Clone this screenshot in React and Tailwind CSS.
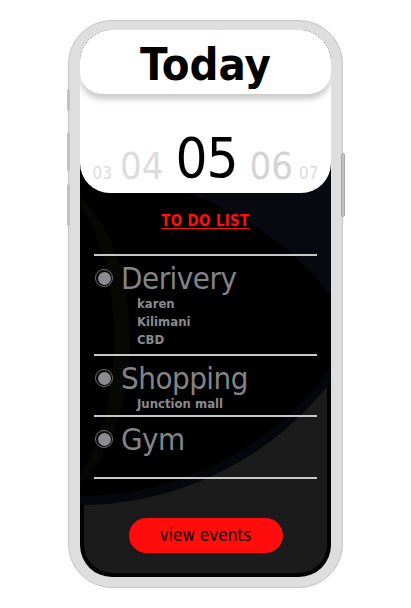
import React from "react";

const font = { fontFamily: "'DejaVu Sans Condensed', 'DejaVu Sans', sans-serif" };

function Task({ title, subs, pb }) {
  return (
    <div className="flex flex-col">
      <div className="flex items-center h-[44px]">
        <span className="ml-[1px] w-[18px] h-[18px] rounded-full border border-[#6f6f6f] flex items-center justify-center">
          <span className="w-[13px] h-[13px] rounded-full bg-[#8c8c90]" />
        </span>
        <span className="ml-[8px] text-[31px] text-[#838388] leading-none tracking-[-0.5px]">{title}</span>
      </div>
      {subs.length > 0 && (
        <div className="pl-[43px] flex flex-col -mt-[5px]" style={{ paddingBottom: pb }}>
          {subs.map((s) => (
            <span key={s} className="text-[13px] font-bold text-[#8a8a8e] leading-[18px]">
              {s}
            </span>
          ))}
        </div>
      )}
    </div>
  );
}

export default function App() {
  return (
    <div className="w-[411px] h-[608px] bg-white flex justify-center pt-[20px]" style={font}>
      <div className="relative w-[275px] h-[568px] rounded-[44px] bg-[#dedede] border border-[#c4c4c4] pt-[9px] px-[11px] pb-[10px]">
        {/* side buttons */}
        <div className="absolute left-[-2px] top-[68px] w-[3px] h-[22px] rounded bg-[#c2c2c2]" />
        <div className="absolute left-[-2px] top-[111px] w-[3px] h-[39px] rounded bg-[#c2c2c2]" />
        <div className="absolute left-[-2px] top-[163px] w-[3px] h-[42px] rounded bg-[#c2c2c2]" />
        <div className="absolute right-[-3px] top-[132px] w-[4px] h-[64px] rounded bg-[#c2c2c2] border border-[#a8a8a8]" />

        <div className="relative h-full rounded-[32px] bg-black overflow-hidden flex flex-col">
          {/* background decoration */}
          <div className="absolute left-[4px] right-[4px] top-[200px] bottom-[4px] rounded-b-[28px] bg-[#1b1b1b]" />
          <div className="absolute left-[-320px] top-[-175px] w-[640px] h-[650px] rounded-[50%] bg-[#080910] border-[9px] border-[#06070c] overflow-hidden">
            <div className="absolute left-[-52px] top-[304px] w-[664px] h-[541px] rounded-[50%] bg-black" />
          </div>
          <div className="absolute left-[-130px] top-[150px] w-[180px] h-[320px] rounded-[50%] border-r-[16px] border-[#070704]" />

          {/* white top */}
          <div className="relative z-10 bg-white rounded-b-[30px] h-[163px] flex flex-col">
            <div className="h-[64px] rounded-b-[22px] bg-white shadow-[0_5px_6px_rgba(0,0,0,0.22)] flex items-center justify-center pt-[5px]">
              <span className="text-[45px] font-bold text-black leading-none">Today</span>
            </div>
            <div className="flex items-end justify-center mt-[36px] leading-none">
              <span className="text-[17px] text-[#dcdcdc] mb-[4px]">03</span>
              <span className="text-[38px] text-[#dcdcdc] ml-[8px] mb-[1px]">04</span>
              <span className="text-[56px] text-black ml-[12px] tracking-[-1px]">05</span>
              <span className="text-[38px] text-[#d4d4d4] ml-[12px] mb-[1px]">06</span>
              <span className="text-[17px] text-[#dcdcdc] ml-[6px] mb-[4px]">07</span>
            </div>
          </div>

          <div className="relative z-10 flex flex-col flex-1 px-[14px]">
            <div className="mt-[16px] text-center">
              <span className="text-[15px] font-bold text-[#ff1010] underline underline-offset-[2px] tracking-[0.3px]">TO DO LIST</span>
            </div>
            <div className="mt-[21px] h-[2px] bg-[#c8c8c8]" />
            <Task title="Derivery" subs={["karen", "Kilimani", "CBD"]} pb={5} />
            <div className="h-[2px] bg-[#c8c8c8]" />
            <Task title="Shopping" subs={["Junction mall"]} pb={2} />
            <div className="h-[2px] bg-[#c8c8c8]" />
            <Task title="Gym" subs={[]} />
            <div className="mt-[16px] h-[2px] bg-[#c8c8c8]" />
            <div className="mt-[39px] flex justify-center">
              <button className="w-[154px] h-[35px] rounded-full bg-[#ff0d0d] text-black text-[17px] leading-none">
                view events
              </button>
            </div>
          </div>
        </div>
      </div>
    </div>
  );
}
